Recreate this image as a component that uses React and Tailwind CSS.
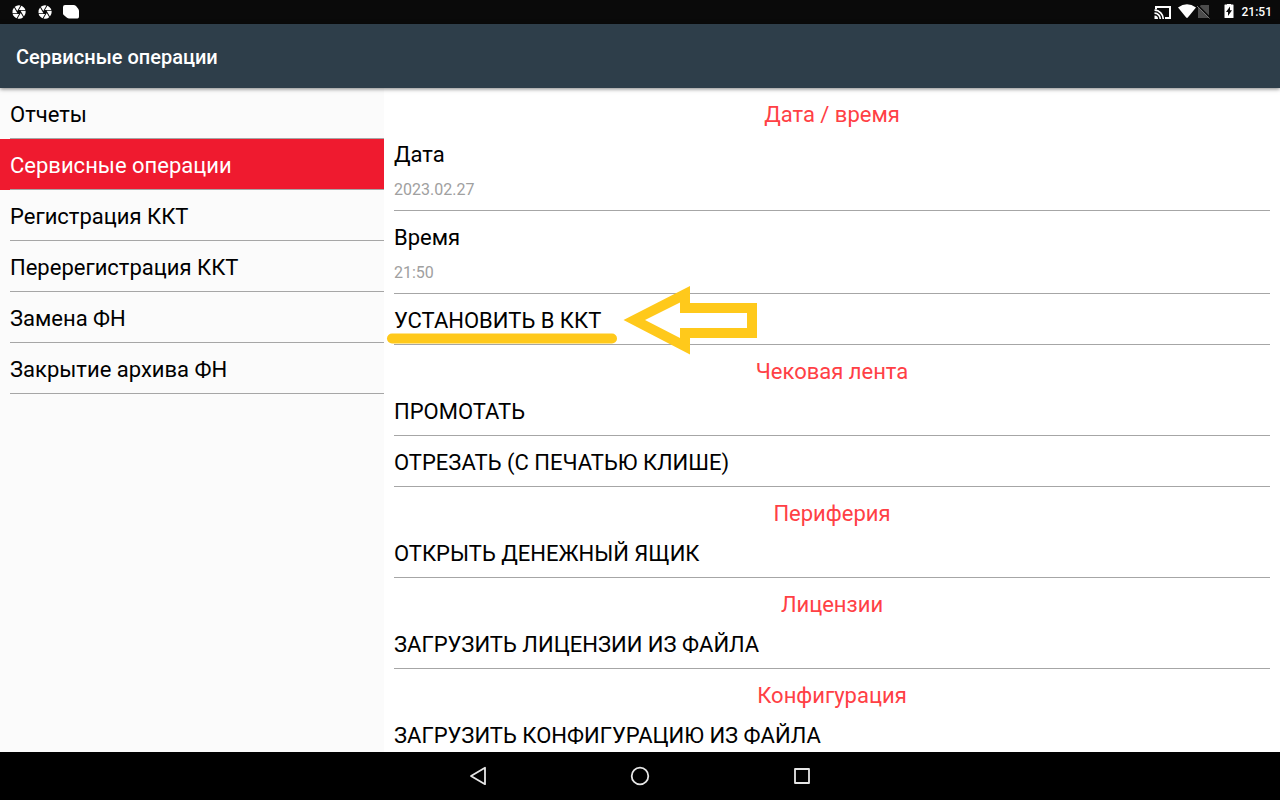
import React from "react";
import { MdCamera } from "react-icons/md";

const menu = [
  "Отчеты",
  "Сервисные операции",
  "Регистрация ККТ",
  "Перерегистрация ККТ",
  "Замена ФН",
  "Закрытие архива ФН",
];

function StatusBar() {
  return (
    <div className="flex h-6 shrink-0 items-center justify-between bg-[#0a0a0a] pl-[11px] pr-2 text-white">
      <div className="flex items-center gap-2.5">
        <MdCamera className="size-4" aria-hidden="true" />
        <MdCamera className="size-4" aria-hidden="true" />
        <svg className="size-4" viewBox="0 0 16 16" fill="currentColor" aria-hidden="true">
          <path d="M2 1H10.500Q12 1 13 2L15 4.500Q16 5.500 16 7V12.500Q16 14.500 14.500 14.500H6Q5 14.500 4 13.800L1 11.200Q0 10.500 0 9.500V3Q0 1 2 1Z" />
        </svg>
      </div>
      <div className="flex items-center">
        <svg className="mr-1.5 h-4 w-[18px]" viewBox="0 0 18 16" fill="none" stroke="#fff" aria-hidden="true">
          <path d="M2 5.500V3H16V14H11" strokeWidth="2" />
          <path d="M0.500 6.200A8.800 8.800 0 0 1 9.300 15M0.500 9.200A5.800 5.800 0 0 1 6.300 15" strokeWidth="1.700" />
          <path d="M0.500 11.500A3.500 3.500 0 0 1 4 15H0.500Z" fill="#fff" stroke="none" />
        </svg>
        <svg className="h-4 w-8" viewBox="0 0 32 16" aria-hidden="true">
          <path d="M0 3.500Q9 -3.200 18 3.500L9.800 13.600Q9 14.400 8.200 13.600Z" fill="#fff" />
          <path d="M20 4L23 1H31V14H20Z" fill="#4d4d4d" />
          <path d="M20 1.500L32 13.500" stroke="#0a0a0a" strokeWidth="1.500" />
          <path d="M19 2L31.500 14.500" stroke="#777" strokeWidth="1" />
        </svg>
        <svg className="ml-3.5 mr-2 h-4 w-2.5" viewBox="0 0 10 16" aria-hidden="true">
          <path d="M3 -1H7V0.500H9Q9.500 0.500 9.500 1V13.500Q9.500 14 9 14H1Q0.500 14 0.500 13.500V1Q0.500 0.500 1 0.500H3Z" fill="#fff" overflow="visible" />
          <path d="M6 2.500V6.300H8L4 12V8H2Z" fill="#0a0a0a" />
        </svg>
        <span className="text-[12px] leading-4 font-medium">21:51</span>
      </div>
    </div>
  );
}

function Section({ title, children }) {
  return (
    <section>
      <h2 className="h-10 pt-3 text-center text-[22px] leading-[30px] text-[#ff4045]">{title}</h2>
      {children}
    </section>
  );
}

function Row({ label, value, children }) {
  return (
    <div className="relative border-b border-[#a6a6a6]">
      <button type="button" className="block w-full pt-3 pb-2 text-left">
        <span className="block text-[22px] leading-[30px]">{label}</span>
        {value && <span className="mt-2.5 block pb-0.5 text-[16px] leading-5 text-[#a0a0a0]">{value}</span>}
      </button>
      {children}
    </div>
  );
}

function Marker() {
  return (
    <svg
      className="pointer-events-none absolute -left-2 -top-2 h-[70px] w-[372px]"
      viewBox="386 286 372 70"
      aria-hidden="true"
    >
      <rect x="387" y="333.500" width="230" height="10" rx="5" fill="#ffc91b" />
      <path
        fill="#ffc91b"
        fillRule="evenodd"
        d="M623.500 320L690 286V303H757V338H690V354.500Z M645 320L680 338V328H747V313H680V302.500Z"
      />
    </svg>
  );
}

function NavButton({ label, children }) {
  return (
    <button type="button" aria-label={label} className="flex size-12 items-center justify-center">
      <svg className="size-6" viewBox="0 0 24 24" fill="none" stroke="#e6e6e6" strokeWidth="1.800" aria-hidden="true">
        {children}
      </svg>
    </button>
  );
}

export default function App() {
  return (
    <div className="flex h-screen flex-col overflow-hidden bg-white font-[Roboto,sans-serif] text-black">
      <StatusBar />
      <header className="relative flex h-16 shrink-0 items-center bg-[#2e3e4a] px-4 pt-0.5 text-white shadow-[0_1px_4px_rgba(0,0,0,0.5)]">
        <h1 className="text-[20px] leading-7 font-medium">Сервисные операции</h1>
      </header>
      <div className="flex min-h-0 flex-1">
        <nav className="w-[30%] shrink-0 bg-[#fbfbfb]">
          <ul>
            {menu.map((item, i) => (
              <li key={item} className={i === 1 ? "bg-[#ef1a2f] pl-2.5 text-white" : "pl-2.5"}>
                <a
                  href="#"
                  aria-current={i === 1 ? "page" : undefined}
                  className="block border-b border-[#a6a6a6] pt-3 pb-2 text-[22px] leading-[30px]"
                >
                  {item}
                </a>
              </li>
            ))}
          </ul>
        </nav>
        <main className="min-w-0 flex-1 overflow-y-auto px-2.5 [scrollbar-width:none]">
          <Section title="Дата / время">
            <Row label="Дата" value="2023.02.27" />
            <Row label="Время" value="21:50" />
            <Row label="УСТАНОВИТЬ В ККТ">
              <Marker />
            </Row>
          </Section>
          <Section title="Чековая лента">
            <Row label="ПРОМОТАТЬ" />
            <Row label="ОТРЕЗАТЬ (С ПЕЧАТЬЮ КЛИШЕ)" />
          </Section>
          <Section title="Периферия">
            <Row label="ОТКРЫТЬ ДЕНЕЖНЫЙ ЯЩИК" />
          </Section>
          <Section title="Лицензии">
            <Row label="ЗАГРУЗИТЬ ЛИЦЕНЗИИ ИЗ ФАЙЛА" />
          </Section>
          <Section title="Конфигурация">
            <Row label="ЗАГРУЗИТЬ КОНФИГУРАЦИЮ ИЗ ФАЙЛА" />
          </Section>
        </main>
      </div>
      <footer className="flex h-12 shrink-0 items-center justify-center gap-[114px] bg-black">
        <NavButton label="Назад">
          <path d="M19 3.800V20.200L5 12Z" strokeLinejoin="round" />
        </NavButton>
        <NavButton label="Домой">
          <circle cx="12" cy="12" r="8.300" />
        </NavButton>
        <NavButton label="Обзор">
          <rect x="5" y="5" width="14" height="14" strokeLinejoin="round" />
        </NavButton>
      </footer>
    </div>
  );
}
